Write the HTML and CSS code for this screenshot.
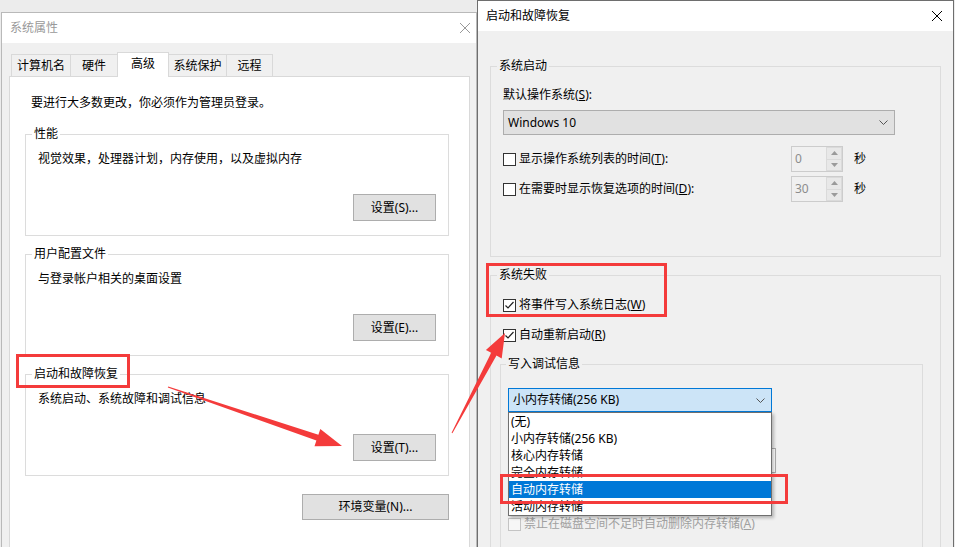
FILE: index.html
```html
<!DOCTYPE html>
<html lang="zh-CN">
<head>
    <meta charset="UTF-8">
    <meta name="viewport" content="width=device-width, initial-scale=1.0">
    <title>启动和故障恢复</title>
    <link rel="stylesheet" href="styles.css">
</head>
<body>
    <div class="desktop">
        <!-- 系统属性 -->
        <div class="win win-sys">
            <div class="titlebar inactive">
                <span>系统属性</span>
                <svg class="close" width="10" height="10" viewBox="0 0 10 10"><path d="M0 0L10 10M10 0L0 10" /></svg>
            </div>
            <div class="win-body">
                <div class="tab-area">
                    <div class="tabs">
                        <div class="tab t1">计算机名</div>
                        <div class="tab t2">硬件</div>
                        <div class="tab t3 active">高级</div>
                        <div class="tab t4">系统保护</div>
                        <div class="tab t5">远程</div>
                    </div>
                    <div class="tab-panel">
                        <p class="intro">要进行大多数更改，你必须作为管理员登录。</p>
                        <fieldset class="group sys-group">
                            <legend>性能</legend>
                            <p>视觉效果，处理器计划，内存使用，以及虚拟内存</p>
                            <div class="btn-row"><button class="btn">设置(S)...</button></div>
                        </fieldset>
                        <fieldset class="group sys-group">
                            <legend>用户配置文件</legend>
                            <p>与登录帐户相关的桌面设置</p>
                            <div class="btn-row"><button class="btn">设置(E)...</button></div>
                        </fieldset>
                        <fieldset class="group sys-group">
                            <legend>启动和故障恢复</legend>
                            <p>系统启动、系统故障和调试信息</p>
                            <div class="btn-row"><button class="btn">设置(T)...</button></div>
                        </fieldset>
                        <div class="btn-row env-row"><button class="btn btn-wide">环境变量(N)...</button></div>
                    </div>
                </div>
            </div>
        </div>

        <!-- 启动和故障恢复 -->
        <div class="win win-boot">
            <div class="titlebar">
                <span>启动和故障恢复</span>
                <svg class="close" width="10" height="10" viewBox="0 0 10 10"><path d="M0 0L10 10M10 0L0 10" /></svg>
            </div>
            <div class="win-body boot-body">
                <fieldset class="group boot-group">
                    <legend>系统启动</legend>
                    <div class="field-label">默认操作系统(<u>S</u>):</div>
                    <div class="combo">
                        <span>Windows 10</span>
                        <svg class="chev" width="9" height="5" viewBox="0 0 9 5"><path d="M0.5 0.5L4.5 4.5L8.5 0.5" /></svg>
                    </div>
                    <div class="spin-row">
                        <div class="check"><span class="box"></span>显示操作系统列表的时间(<u>T</u>):</div>
                        <div class="spin">
                            <span class="spin-val">0</span>
                            <span class="spin-btns">
                                <span class="spin-btn"><svg width="7" height="4" viewBox="0 0 7 4"><path d="M0 4L3.5 0L7 4Z" /></svg></span>
                                <span class="spin-btn"><svg width="7" height="4" viewBox="0 0 7 4"><path d="M0 0L3.5 4L7 0Z" /></svg></span>
                            </span>
                        </div>
                        <span class="unit">秒</span>
                    </div>
                    <div class="spin-row second">
                        <div class="check"><span class="box"></span>在需要时显示恢复选项的时间(<u>D</u>):</div>
                        <div class="spin">
                            <span class="spin-val">30</span>
                            <span class="spin-btns">
                                <span class="spin-btn"><svg width="7" height="4" viewBox="0 0 7 4"><path d="M0 4L3.5 0L7 4Z" /></svg></span>
                                <span class="spin-btn"><svg width="7" height="4" viewBox="0 0 7 4"><path d="M0 0L3.5 4L7 0Z" /></svg></span>
                            </span>
                        </div>
                        <span class="unit">秒</span>
                    </div>
                </fieldset>

                <fieldset class="group fail-group">
                    <legend>系统失败</legend>
                    <div class="check"><span class="box checked"><svg width="11" height="11" viewBox="0 0 11 11"><path d="M1.5 5.5L4 8L9.5 2" /></svg></span>将事件写入系统日志(<u>W</u>)</div>
                    <div class="check second"><span class="box checked"><svg width="11" height="11" viewBox="0 0 11 11"><path d="M1.5 5.5L4 8L9.5 2" /></svg></span>自动重新启动(<u>R</u>)</div>

                    <fieldset class="group debug-group">
                        <legend>写入调试信息</legend>
                        <div class="combo combo-open">
                            <span>小内存转储(256 KB)</span>
                            <svg class="chev" width="9" height="5" viewBox="0 0 9 5"><path d="M0.5 0.5L4.5 4.5L8.5 0.5" /></svg>
                            <ul class="dropdown">
                                <li>(无)</li>
                                <li>小内存转储(256 KB)</li>
                                <li>核心内存转储</li>
                                <li>完全内存转储</li>
                                <li class="selected">自动内存转储</li>
                                <li>活动内存转储</li>
                            </ul>
                        </div>
                        <!-- 转储文件框，大部分被下拉列表挡住 -->
                        <div class="dump-input"></div>
                        <div class="check disabled"><span class="box"></span>禁止在磁盘空间不足时自动删除内存转储(<u>A</u>)</div>
                    </fieldset>
                </fieldset>
            </div>
        </div>

        <!-- 标注 -->
        <svg class="annot" width="955" height="547" viewBox="0 0 955 547">
            <rect x="17.5" y="355.5" width="111" height="31" />
            <rect x="487.5" y="264.5" width="178" height="51" />
            <rect x="501.5" y="475.5" width="285" height="27" />
            <polygon points="168.2,386.5 318.4,434.8 320.3,429.1 342,446 314.5,446.2 316.4,440.5 167.8,387.5" />
            <polygon points="451.6,432.8 491.2,352.8 485.9,350 505,333 501.7,358.4 496.5,355.6 452.4,433.2" />
        </svg>
    </div>
</body>
</html>
```

FILE: styles.css
```css
html, body {
    padding: 0;
    margin: 0;
}
body {
    font-family: "Noto Sans", "Noto Sans CJK SC", sans-serif;
    font-size: 12px;
    line-height: 16px;
    color: #000;
}
p {
    margin: 0;
}

.desktop {
    position: relative;
    width: 955px;
    height: 547px;
    overflow: hidden;
    background: #ececec;
}

/* windows */
.win {
    position: absolute;
    box-sizing: border-box;
    height: 600px;
    display: flex;
    flex-direction: column;
}
.win-sys {
    left: 1px;
    top: 12px;
    width: 476px;
    border: 1px solid #b9b9b9;
}
.win-boot {
    left: 477px;
    top: 0;
    width: 477px;
    border: 1px solid #6e6e6e;
}
.titlebar {
    flex: none;
    height: 30px;
    background: #fff;
    display: flex;
    align-items: center;
    justify-content: space-between;
    padding: 0 11px 0 8px;
}
.titlebar.inactive {
    color: #999;
    padding-right: 6px;
}
.close path {
    stroke: #000;
    stroke-width: 1;
    fill: none;
}
.inactive .close path {
    stroke: #999;
}
.win-body {
    flex: 1;
    background: #f0f0f0;
}

/* tabs */
.tab-area {
    margin: 9px 6px 0 7px;
}
.tabs {
    display: flex;
    align-items: flex-end;
    padding-left: 2px;
}
.tab {
    box-sizing: border-box;
    height: 22px;
    border: 1px solid #d9d9d9;
    border-bottom: none;
    background: #f0f0f0;
    display: flex;
    align-items: center;
    justify-content: center;
    margin-left: -1px;
}
.tab.t1 { width: 60px; margin-left: 0; }
.tab.t2 { width: 48px; }
.tab.t3 { width: 52px; }
.tab.t4 { width: 59px; }
.tab.t5 { width: 47px; }
.tab.active {
    height: 25px;
    background: #fff;
    margin-bottom: -1px;
    position: relative;
    z-index: 1;
    padding-bottom: 2px;
}
.tab-panel {
    background: #fff;
    border: 1px solid #d9d9d9;
    height: 500px;
    padding: 18px 20px 0 15px;
}
.intro {
    margin-left: 6px;
}

/* group boxes */
.group {
    margin: 0;
    border: 1px solid #dcdcdc;
    min-width: 0;
}
.group legend {
    margin-left: -6px;
    padding: 0 2px;
    line-height: 16px;
}
.sys-group {
    margin-top: 10px;
    padding: 9px 12px 14px 12px;
}
.intro + .sys-group {
    margin-top: 15px;
}
.btn-row {
    display: flex;
    justify-content: flex-end;
    margin-top: 27px;
}
.btn {
    font: inherit;
    color: #000;
    background: #e1e1e1;
    border: 1px solid #adadad;
    width: 83px;
    height: 27px;
    padding: 0;
}
.env-row {
    margin-top: 18px;
}
.btn-wide {
    width: 147px;
    height: 26px;
}

/* boot dialog */
.boot-body {
    padding: 27px 12px 0;
}
.boot-group {
    padding: 13px 0 54px 12px;
}
.combo {
    box-sizing: border-box;
    width: 392px;
    height: 25px;
    margin-top: 7px;
    background: #e1e1e1;
    border: 1px solid #adadad;
    display: flex;
    align-items: center;
    justify-content: space-between;
    padding: 0 6px 0 4px;
}
.chev path {
    stroke: #555;
    stroke-width: 1;
    fill: none;
}
.spin-row {
    display: flex;
    align-items: center;
    height: 26px;
    margin-top: 11px;
}
.spin-row.second {
    margin-top: 4px;
}
.spin-row .check {
    width: 288px;
}
.check {
    display: flex;
    align-items: center;
    height: 16px;
}
.box {
    box-sizing: border-box;
    width: 13px;
    height: 13px;
    border: 1px solid #333;
    background: #fff;
    margin-right: 3px;
    flex: none;
    display: flex;
}
.box.checked path {
    stroke: #222;
    stroke-width: 1.2;
    fill: none;
}
.spin {
    box-sizing: border-box;
    width: 52px;
    height: 26px;
    border: 1px solid #cccccc;
    background: #f0f0f0;
    display: flex;
}
.spin-val {
    flex: 1;
    color: #8c8c8c;
    padding-left: 3px;
    line-height: 24px;
}
.spin-btns {
    width: 16px;
    display: flex;
    flex-direction: column;
}
.spin-btn {
    box-sizing: border-box;
    flex: 1;
    border: 1px solid #dadada;
    background: #e8e8e8;
    display: flex;
    align-items: center;
    justify-content: center;
}
.spin-btn + .spin-btn {
    border-top: none;
}
.spin-btn path {
    fill: #9a9a9a;
}
.unit {
    margin-left: 11px;
}

.fail-group {
    margin-top: 10px;
    padding: 14px 0 40px 12px;
}
.fail-group > .check.second {
    margin-top: 14px;
}
.debug-group {
    margin: 13px 17px 0 -3px;
    padding: 16px 0 20px 7px;
}
.debug-group legend {
    margin-left: -2px;
}
.combo-open {
    position: relative;
    width: 264px;
    height: 24px;
    margin-top: 0;
    background: #cce4f7;
    border-color: #0078d7;
}
.dropdown {
    position: absolute;
    top: calc(100% + 1px);
    left: -1px;
    right: -1px;
    margin: 0;
    padding: 0;
    list-style: none;
    background: #fff;
    border: 1px solid #6f6f6f;
    box-shadow: 2px 2px 3px rgba(0, 0, 0, 0.25);
    z-index: 5;
}
.dropdown li {
    height: 17px;
    line-height: 17px;
    padding: 0 2px;
}
.dropdown li.selected {
    background: #0078d7;
    color: #fff;
}
.dump-input {
    box-sizing: border-box;
    width: 268px;
    height: 25px;
    margin-top: 36px;
    border: 1px solid #adadad;
    background: #fff;
}
.check.disabled {
    margin-top: 43px;
    color: #a0a0a0;
}
.check.disabled .box {
    border-color: #c4c4c4;
    background: #f7f7f7;
}

/* annotations */
.annot {
    position: absolute;
    left: 0;
    top: 0;
    z-index: 10;
    pointer-events: none;
}
.annot rect {
    fill: none;
    stroke: #f43b3b;
    stroke-width: 3;
}
.annot polygon {
    fill: #f43b3b;
}
```
